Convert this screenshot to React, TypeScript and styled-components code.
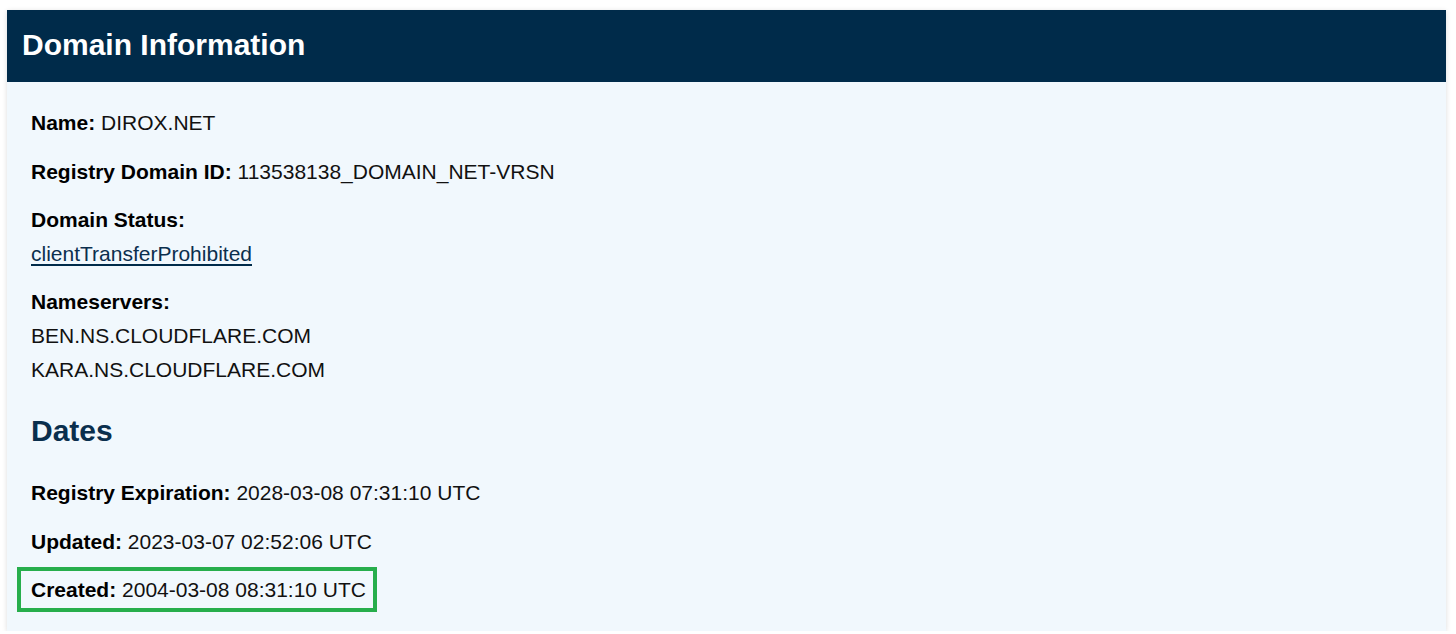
import React from "react";
import styled, { createGlobalStyle } from "styled-components";

const GlobalStyle = createGlobalStyle`
  html, body {
    margin: 0;
    padding: 0;
    background: #ffffff;
  }
  body {
    font-family: "Liberation Sans", Arial, sans-serif;
    color: #111111;
  }
`;

const Page = styled.div`
  padding: 10px 10px 0 7px;
`;

const Card = styled.section`
  background: #f1f8fd;
  box-shadow: 0 1px 5px rgba(0, 0, 0, 0.14);
`;

const Header = styled.header`
  background: #002b4a;
  padding: 17px 15px 19px;
`;

const Title = styled.h2`
  margin: 0;
  color: #ffffff;
  font-size: 30px;
  line-height: 36px;
  font-weight: 700;
`;

const Body = styled.div`
  padding: 24px 24px 24px;
`;

const Field = styled.div<{ $highlight?: boolean }>`
  position: relative;
  font-size: 21px;
  line-height: 33.6px;
  margin: 0 0 15px;
  width: ${(p) => (p.$highlight ? "fit-content" : "auto")};
  &:last-child {
    margin-bottom: 0;
  }
  ${(p) =>
    p.$highlight &&
    `
    &::after {
      content: "";
      position: absolute;
      left: -14px;
      top: -6px;
      right: -11px;
      bottom: -5px;
      border: 4px solid #27ae4c;
      pointer-events: none;
    }
  `}
`;

const Label = styled.strong`
  font-weight: 700;
  color: #000000;
`;

const Line = styled.div``;

const StatusLink = styled.a`
  color: #0b2f4e;
  text-decoration: underline;
  text-decoration-thickness: 2px;
  text-underline-offset: 3px;
  text-decoration-color: #002b4a;
`;

const SectionTitle = styled.h3`
  margin: 28px 0 28px;
  font-size: 30px;
  line-height: 34px;
  font-weight: 700;
  color: #0a2f4d;
`;

export default function App() {
  return (
    <>
      <GlobalStyle />
      <Page>
        <Card>
          <Header>
            <Title>Domain Information</Title>
          </Header>
          <Body>
            <Field>
              <Label>Name:</Label> DIROX.NET
            </Field>
            <Field>
              <Label>Registry Domain ID:</Label> 113538138_DOMAIN_NET-VRSN
            </Field>
            <Field>
              <Line>
                <Label>Domain Status:</Label>
              </Line>
              <Line>
                <StatusLink href="#">clientTransferProhibited</StatusLink>
              </Line>
            </Field>
            <Field>
              <Line>
                <Label>Nameservers:</Label>
              </Line>
              <Line>BEN.NS.CLOUDFLARE.COM</Line>
              <Line>KARA.NS.CLOUDFLARE.COM</Line>
            </Field>
            <SectionTitle>Dates</SectionTitle>
            <Field>
              <Label>Registry Expiration:</Label> 2028-03-08 07:31:10 UTC
            </Field>
            <Field>
              <Label>Updated:</Label> 2023-03-07 02:52:06 UTC
            </Field>
            <Field $highlight>
              <Label>Created:</Label> 2004-03-08 08:31:10 UTC
            </Field>
          </Body>
        </Card>
      </Page>
    </>
  );
}
